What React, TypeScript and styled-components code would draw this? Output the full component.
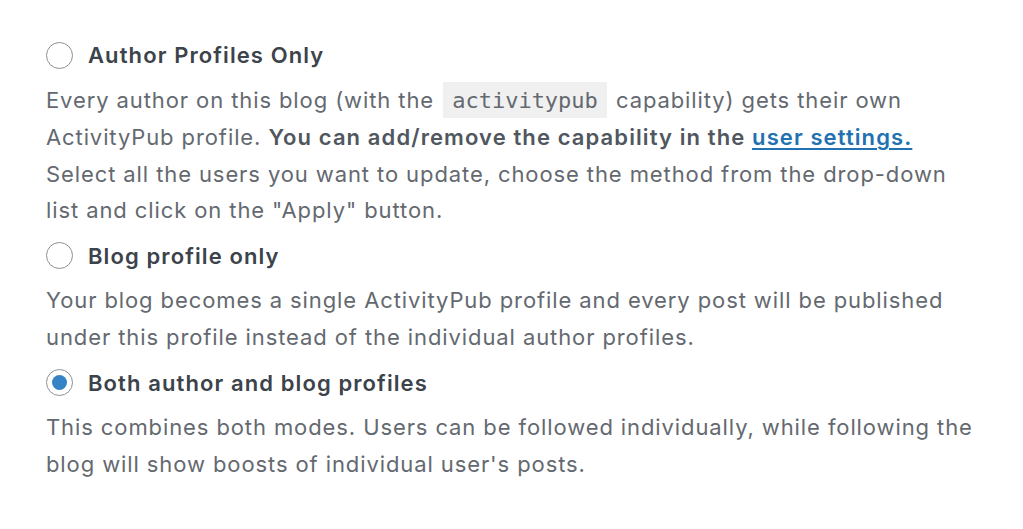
import type { ReactNode } from 'react';
import styled, { createGlobalStyle } from 'styled-components';

const GlobalStyle = createGlobalStyle`
  html, body {
    margin: 0;
    padding: 0;
    background: #ffffff;
  }
  body {
    font-family: Inter, "Noto Sans", "Liberation Sans", sans-serif;
    -webkit-font-smoothing: antialiased;
  }
`;

const Options = styled.div`
  display: flex;
  flex-direction: column;
  gap: 8.5px;
  padding: 36.5px 0 0 46px;
  width: 930px;
`;

const Option = styled.div`
  display: flex;
  flex-direction: column;
  gap: 8px;
`;

const Label = styled.label`
  display: flex;
  align-items: center;
  gap: 15px;
  height: 37px;
  font-size: 22px;
  font-weight: 600;
  letter-spacing: 1.1px;
  color: #3c434a;
  cursor: pointer;
`;

const Radio = styled.span<{ $checked?: boolean }>`
  position: relative;
  box-sizing: border-box;
  flex: none;
  width: 27px;
  height: 27px;
  border: 1.5px solid #8c8f94;
  border-radius: 50%;
  background: #fff;

  &::after {
    content: '';
    display: ${(p) => (p.$checked ? 'block' : 'none')};
    position: absolute;
    inset: 5px;
    border-radius: 50%;
    background: #3582c4;
  }
`;

const Description = styled.p`
  margin: 0;
  font-size: 22px;
  line-height: 36.6px;
  letter-spacing: 0.9px;
  color: #646970;

  strong {
    font-weight: 600;
    letter-spacing: 1.1px;
    color: #50575e;
  }
  a {
    color: #2271b1;
    text-decoration: underline;
    text-underline-offset: 3px;
  }
`;

const Code = styled.code`
  font-family: "DejaVu Sans Mono", "Liberation Mono", monospace;
  font-size: 22px;
  letter-spacing: 0;
  padding: 6px 9px 5px;
  margin: 0 2px;
  background: #f0f0f1;
  color: #646970;
`;

type Mode = {
  id: string;
  title: string;
  description: ReactNode;
};

const modes: Mode[] = [
  {
    id: 'actor',
    title: 'Author Profiles Only',
    description: (
      <>
        Every author on this blog (with the <Code>activitypub</Code> capability) gets their own
        ActivityPub profile.{' '}
        <strong>
          You can add/remove the capability in the <a href="#users">user settings.</a>
        </strong>{' '}
        Select all the users you want to update, choose the method from the drop-down list and
        click on the "Apply" button.
      </>
    ),
  },
  {
    id: 'blog',
    title: 'Blog profile only',
    description:
      'Your blog becomes a single ActivityPub profile and every post will be published under this profile instead of the individual author profiles.',
  },
  {
    id: 'actor_blog',
    title: 'Both author and blog profiles',
    description:
      "This combines both modes. Users can be followed individually, while following the blog will show boosts of individual user's posts.",
  },
];

const App = () => {
  return (
    <>
      <GlobalStyle />
      <Options>
        {modes.map((mode) => (
          <Option key={mode.id}>
            <Label>
              <Radio $checked={mode.id === 'actor_blog'} />
              <span>{mode.title}</span>
            </Label>
            <Description>{mode.description}</Description>
          </Option>
        ))}
      </Options>
    </>
  );
};

export default App;
